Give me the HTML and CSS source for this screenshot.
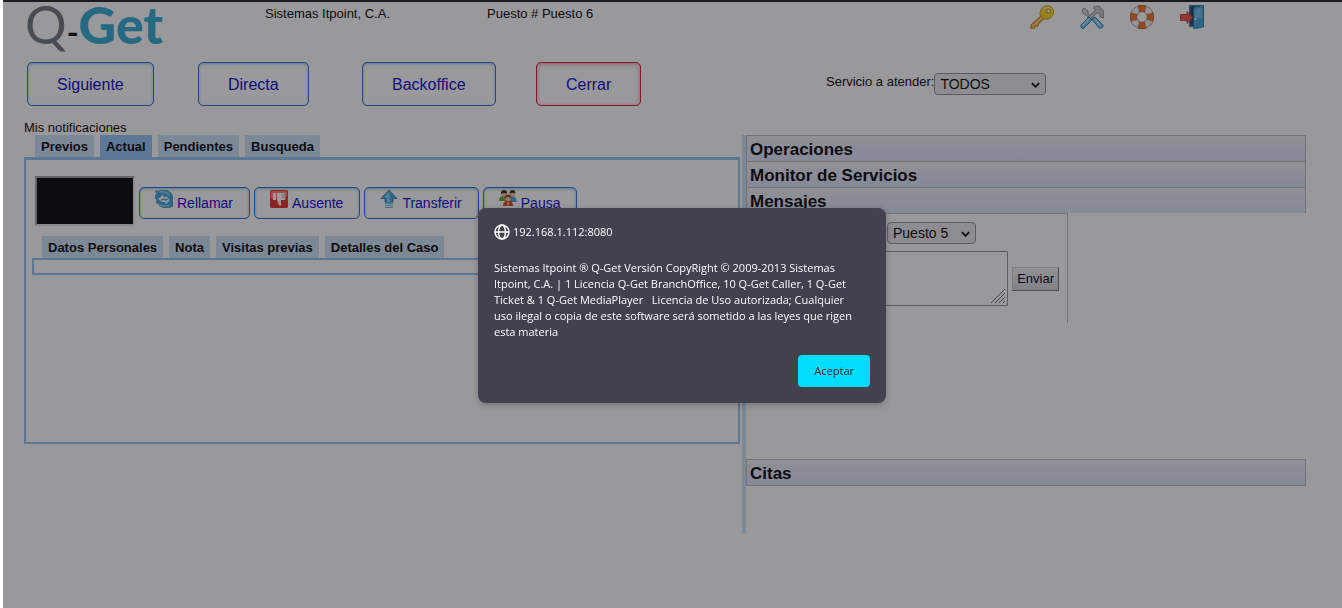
FILE: index.html
```html
<!DOCTYPE html>
<html lang="es">
<head>
<meta charset="utf-8">
<title>Q-Get</title>
<link rel="stylesheet" href="styles.css">
</head>
<body>
<div class="screen">
  <header class="header">
    <h1 class="logo"><span class="logo-q">Q</span><span class="logo-dash">-</span><span class="logo-get">Get</span></h1>
    <span class="company">Sistemas Itpoint, C.A.</span>
    <span class="desk">Puesto # Puesto 6</span>
    <nav class="tools">
      <a href="#clave" aria-label="Clave"><svg viewBox="0 0 24 24"><path d="M1 20 13 9l3 3-7 6-1 3-3 .5-1 2.500-3 .5z" fill="#f5b52c" stroke="#c7662a" stroke-width="1"/><path d="M3 21 14 11" stroke="#ffe07a" stroke-width="1.200"/><path d="M16 1c4-1 8 2 7.500 6.500S19 15 15 14s-6-4-4.500-8S14 1.200 16 1z" fill="#ffd51f" stroke="#d09416"/><path d="M13 5c2-3 6-3 8-1" stroke="#fff19a" stroke-width="1.500" fill="none"/><circle cx="18.500" cy="6" r="1.900" fill="#fff" stroke="#a98320"/></svg></a>
      <a href="#ajustes" aria-label="Ajustes"><svg viewBox="0 0 24 24"><path d="m2 5 2-2 4 3v3l5 4-1.500 2-5-5-3-1z" fill="#d7d7da" stroke="#77777d" stroke-width=".8"/><path d="m12 14 3-2 8 8c1 2-2 4-4 3z" fill="#6ec8f2" stroke="#267cae"/><path d="M14 1.500 19 1l3 3 2 3-.5 6-3-1-1-3.500-2.500-.5L9 15l-2-2 8.500-8-2-1.500z" fill="#c9c9ce" stroke="#77777d" stroke-width=".8"/><path d="m9 12 3 3-8 8c-2 1-4-1-3-3z" fill="#6ec8f2" stroke="#267cae"/><path d="m3 20 6-6M15 15l6 6" stroke="#c7efff" stroke-width="1.200"/></svg></a>
      <a href="#ayuda" aria-label="Ayuda"><svg viewBox="0 0 24 24"><circle cx="12" cy="12" r="8.500" fill="none" stroke="#8d8d92" stroke-width="7"/><circle cx="12" cy="12" r="8.500" fill="none" stroke="#f5f5f7" stroke-width="5.600"/><g fill="#ee741f" stroke="#b94e12" stroke-width=".6"><path d="M8 .8Q12-.6 16 .8L14.500 7Q12 6 9.500 7z"/><path d="M8 23.200q4 1.400 8 0L14.500 17Q12 18 9.500 17z"/><path d="M.8 8Q-.6 12 .8 16L7 14.500Q6 12 7 9.500z"/><path d="M23.200 8q1.400 4 0 8L17 14.500q1-2.500 0-5z"/></g></svg></a>
      <a href="#salir" aria-label="Salir"><svg viewBox="0 0 24 24"><path d="M9.500.5h14v21h-14z" fill="#1c5f8d" stroke="#2d7bab"/><path d="M11 2h3v18h-3z" fill="#123b58"/><path d="M13.500 2.500 23.500 0v22l-10 2z" fill="#3fa0d6" stroke="#1e6d9f" stroke-width=".6"/><path d="m15 4 7-1.500V12l-7 2z" fill="#65bce8"/><circle cx="15.500" cy="14" r="1" fill="#fff"/><path d="M.5 9.500H7V6.500l6 6-6 6v-3H.5z" fill="#f14b3c" stroke="#b32a24" stroke-width=".8"/></svg></a>
    </nav>
  </header>

  <div class="actions">
    <div><a class="action" href="#siguiente">Siguiente</a></div>
    <div><a class="action" href="#directa">Directa</a></div>
    <div><a class="action" href="#backoffice">Backoffice</a></div>
    <div><a class="action action-close" href="#cerrar">Cerrar</a></div>
    <div class="service">
      <label for="servicio">Servicio a atender:</label>
      <span class="select select-service"><select id="servicio"><option>TODOS</option></select><svg viewBox="0 0 10 6"><path d="m1 1 4 4 4-4"/></svg></span>
    </div>
  </div>

  <p class="notices">Mis notificaciones</p>

  <main class="columns">
    <section class="left">
      <nav class="tabs">
        <a href="#previos">Previos</a><a class="current" href="#actual">Actual</a><a href="#pendientes">Pendientes</a><a href="#busqueda">Busqueda</a>
      </nav>
      <div class="panel">
        <div class="ticket-row">
          <div class="ticket"></div>
          <a class="tool" href="#rellamar"><svg viewBox="0 0 18 18"><path d="M0 1h4c4-2 9-1 12 2l2 4v9l-2 1c-4 2-9 1-12-2l-3-3 1-2-2-2V6l2-2z" fill="#3fa5d8" stroke="#2c7fae" stroke-width=".6"/><path d="M4 2.500c4-2 9 0 11 3.500M3 14c4 3 8 2.500 12 1" fill="none" stroke="#8fd2f2" stroke-width="1.300"/><path d="m3 9 5-4 1 2h3l3 3-4 4-1-2H7z" fill="#eef9ff"/><path d="m6 10 3-1 2 1 2-1" fill="none" stroke="#3f9bcc" stroke-width="1.300"/></svg>Rellamar</a>
          <a class="tool" href="#ausente"><svg viewBox="0 0 18 18"><path d="M1 0h16l1 1v16l-1 1H1l-1-1V1z" fill="#e62e25"/><path d="M1 1h16v5L1 9z" fill="#f18468"/><path d="M3 3h3v7H3zM7 3h7l1 1v1l1 1-1 1 1 1-1 1v1h-4v5l-1 1-1-1-2-5z" fill="#fff"/><path d="M12 5h3M12 7h3" stroke="#d55a4e" stroke-width=".7"/></svg>Ausente</a>
          <a class="tool" href="#transferir"><svg viewBox="0 0 18 18"><path d="M9 0 17 8.500h-4V12H5V8.500H1z" fill="#3aa5dc" stroke="#237aac" stroke-width=".8"/><path d="M9 2 4 7.500h3V12h3z" fill="#8cd3f3"/><path d="M5 12.500h8v1.500H5zM5 15h8v1H5zM5 17h8v1H5z" fill="#4fb4e3"/></svg>Transferir</a>
          <a class="tool" href="#pausa"><svg viewBox="0 0 18 18"><path d="M0 11q0-5 4-5t6 5z" fill="#54a832"/><path d="M9 12q0-6 4-6t5 6z" fill="#47a3dc"/><circle cx="5" cy="4" r="2.700" fill="#f4c493"/><circle cx="13.500" cy="4" r="2.700" fill="#f4c493"/><path d="M2 4q-.5-4 3-4t3 4Q6 2 2 4zM10.500 4q0-4 3-4t3 4q-2-2.500-6 0z" fill="#30251f"/><path d="M4 16q0-5.500 5-5.500t5 5.500z" fill="#e13b28"/><circle cx="9" cy="8" r="3" fill="#f7ca99"/><path d="M6 10q-1.500-5.500 3-5.500t3 5.500q0-3-3-3t-3 3z" fill="#a84a1d"/><path d="m9 11 1.500 3L9 16l-1.500-2z" fill="#f4c040"/></svg>Pausa</a>
        </div>
        <nav class="tabs">
          <a href="#datos">Datos Personales</a><a href="#nota">Nota</a><a href="#visitas">Visitas previas</a><a href="#detalles">Detalles del Caso</a>
        </nav>
        <div class="subpanel"></div>
      </div>
    </section>

    <section class="right">
      <h2>Operaciones</h2>
      <h2>Monitor de Servicios</h2>
      <h2 class="open">Mensajes</h2>
      <div class="messages">
        <form class="message-form">
          <span class="select select-desk"><select aria-label="Puesto"><option>Puesto 5</option></select><svg viewBox="0 0 10 6"><path d="m1 1 4 4 4-4"/></svg></span>
          <div class="compose">
            <span class="note"><textarea aria-label="Mensaje"></textarea><svg viewBox="0 0 14 14"><path d="M0 14 14 0M4 14 14 4M8 14l6-6M12 14l2-2"/></svg></span>
            <button type="button">Enviar</button>
          </div>
        </form>
      </div>
      <h2>Citas</h2>
    </section>
  </main>
  <div class="backdrop"></div>
</div>

<dialog class="alert" open aria-labelledby="origin">
  <h2 id="origin"><svg viewBox="0 0 16 16"><circle cx="8" cy="8" r="7"/><ellipse cx="8" cy="8" rx="3.500" ry="7"/><path d="M1 8h14"/></svg>192.168.1.112:8080</h2>
  <p>Sistemas Itpoint ® Q-Get Versión CopyRight © 2009-2013 Sistemas<br>Itpoint, C.A. | 1 Licencia Q-Get BranchOffice, 10 Q-Get Caller, 1 Q-Get<br>Ticket &amp; 1 Q-Get MediaPlayer &nbsp; Licencia de Uso autorizada; Cualquier<br>uso ilegal o copia de este software será sometido a las leyes que rigen<br>esta materia</p>
  <button type="button">Aceptar</button>
</dialog>
</body>
</html>
```

FILE: styles.css
```css
* {
  box-sizing: border-box;
}

body {
  margin: 0;
  background: #fff;
  color: #000;
  font: 13px/16px "Liberation Sans", Arial, sans-serif;
}

a {
  color: #0a00c8;
  text-decoration: none;
}

.screen {
  position: relative;
  min-height: 100vh;
  margin-left: 3px;
  border-top: 2px solid #1c1b22;
}

.backdrop {
  position: absolute;
  inset: 0;
  background: rgba(28, 27, 34, 0.45);
}

.header {
  display: grid;
  grid-template-columns: 240px 222px 1fr auto;
  height: 60px;
  padding: 0 138px 0 22px;
}

.logo {
  display: flex;
  margin: 0;
  font: 52px/44px Lato, sans-serif;
}

.logo-q {
  color: #6f757c;
}

.logo-dash {
  font-size: 32px;
  font-weight: 700;
  line-height: 60px;
}

.logo-get {
  color: #2fa9d2;
  font-weight: 900;
}

.company,
.desk {
  padding-top: 4px;
}

.tools {
  display: flex;
  gap: 26px;
  padding-top: 3px;
}

.tools svg {
  display: block;
  width: 24px;
  height: 24px;
}

.actions {
  display: grid;
  grid-template-columns: 171px 164px 174px 290px auto;
  justify-content: start;
  padding-left: 24px;
}

.action {
  display: inline-block;
  padding: 2px 29px 0;
  border: 1px solid #1f6fd0;
  border-radius: 5px;
  box-shadow: inset 0 1px 3px #8fbdf0;
  font-size: 16px;
  line-height: 40px;
}

.action-close {
  border-color: #d3173a;
  box-shadow: inset 0 1px 4px #f28ba0;
}

.service {
  display: flex;
  align-items: flex-start;
  padding-top: 11px;
}

.service label {
  padding-top: 1px;
}

.select {
  display: inline-block;
  position: relative;
}

.select select {
  width: 100%;
  height: 22px;
  padding: 0 5px;
  border: 1px solid #8f8f9d;
  border-radius: 4px;
  appearance: none;
  background: #e9e9ed;
  color: #000;
  font: 14px "Liberation Sans", Arial, sans-serif;
}

.select svg {
  position: absolute;
  top: 9px;
  right: 6px;
  width: 9px;
  height: 6px;
  fill: none;
  stroke: #000;
  stroke-width: 2;
  pointer-events: none;
}

.select-service {
  width: 112px;
}

.select-desk {
  width: 89px;
}

.notices {
  margin: 14px 0 0 21px;
  line-height: 15px;
}

.columns {
  display: grid;
  grid-template-columns: 716fr 564fr;
  gap: 2px;
  padding: 0 36px 0 21px;
}

.tabs {
  display: flex;
  gap: 6px;
  padding-left: 11px;
}

.tabs a {
  padding: 2px 6px 0;
  background: #cbe2f5;
  color: #000;
  font-weight: 700;
  line-height: 20px;
}

.tabs .current {
  background: #94c4f7;
}

.panel {
  min-height: 287px;
  padding: 16px 5px 0 6px;
  border: 2px solid #8ec4f5;
  border-top-width: 3px;
}

.ticket-row {
  display: flex;
  align-items: flex-start;
  gap: 4px;
  padding: 0 0 10px 3px;
}

.panel .tabs {
  padding-left: 10px;
}

.ticket {
  width: 100px;
  height: 50px;
  border: 2px solid;
  border-color: #a0a0a0 #e3e3e3 #e3e3e3 #a0a0a0;
  background: #000;
}

.tool {
  display: flex;
  gap: 4px;
  height: 32px;
  margin-top: 11px;
  padding: 0 16px 0 15px;
  border: 1px solid #1f6fd0;
  border-radius: 5px;
  box-shadow: inset 0 1px 3px #8fbdf0;
  font-size: 14px;
  line-height: 30px;
}

.tool svg {
  width: 18px;
  height: 18px;
  margin-top: 2px;
}

.subpanel {
  height: 17px;
  border: 2px solid #8ec4f5;
}

.right {
  min-height: 398px;
  border-left: 4px solid #cbe2f5;
}

.right h2 {
  height: 27px;
  margin: 0 0 -1px;
  padding: 2px 0 0 3px;
  border: 1px solid #bbb;
  background: linear-gradient(#f0f0f6, #dce2f8);
  font-size: 17px;
  line-height: 24px;
}

.right .open {
  height: 26px;
  margin: 0;
  border-bottom: 0;
}

.messages {
  height: 246px;
}

.message-form {
  display: flex;
  flex-direction: column;
  align-items: flex-end;
  gap: 7px;
  width: 322px;
  height: 110px;
  padding: 8px 8px 0 0;
  border-top: 1px solid #bbb;
  border-right: 1px solid #bbb;
}

.message-form .select {
  margin-right: 83px;
}

.compose {
  display: flex;
  align-items: center;
  gap: 4px;
}

.note {
  position: relative;
}

.note textarea {
  display: block;
  width: 240px;
  height: 55px;
  border: 1px solid #8f8f9d;
  border-radius: 1px;
  resize: none;
}

.note svg {
  position: absolute;
  right: 3px;
  bottom: 3px;
  width: 14px;
  height: 14px;
  stroke: #666;
}

.compose button {
  height: 24px;
  padding: 0 4px;
  border: 1px solid;
  border-color: #ccc #777 #777 #ccc;
  background: linear-gradient(#f2f2f4, #d6d6da);
  color: #000;
  font: 13px "Liberation Sans", Arial, sans-serif;
}

.alert {
  position: fixed;
  top: 208px;
  left: calc(50% + 11px);
  width: 408px;
  margin: 0 0 0 -204px;
  padding: 16px;
  border: 0;
  border-radius: 8px;
  background: #42414d;
  box-shadow: 0 2px 6px rgba(28, 27, 34, 0.3);
  color: #fbfbfe;
  font: 11px/16px "Open Sans", "Noto Sans", sans-serif;
  white-space: nowrap;
}

.alert h2 {
  display: flex;
  align-items: center;
  gap: 3px;
  margin: 0 0 20px;
  font-size: 11px;
  font-weight: 400;
}

.alert h2 svg {
  width: 16px;
  height: 16px;
  fill: none;
  stroke: #fbfbfe;
  stroke-width: 1.500;
}

.alert p {
  margin: 0 0 15px;
}

.alert button {
  display: block;
  height: 32px;
  margin-left: auto;
  padding: 0 16px;
  border: 0;
  border-radius: 4px;
  background: #0df;
  color: #2b2a33;
  font: inherit;
}
```
